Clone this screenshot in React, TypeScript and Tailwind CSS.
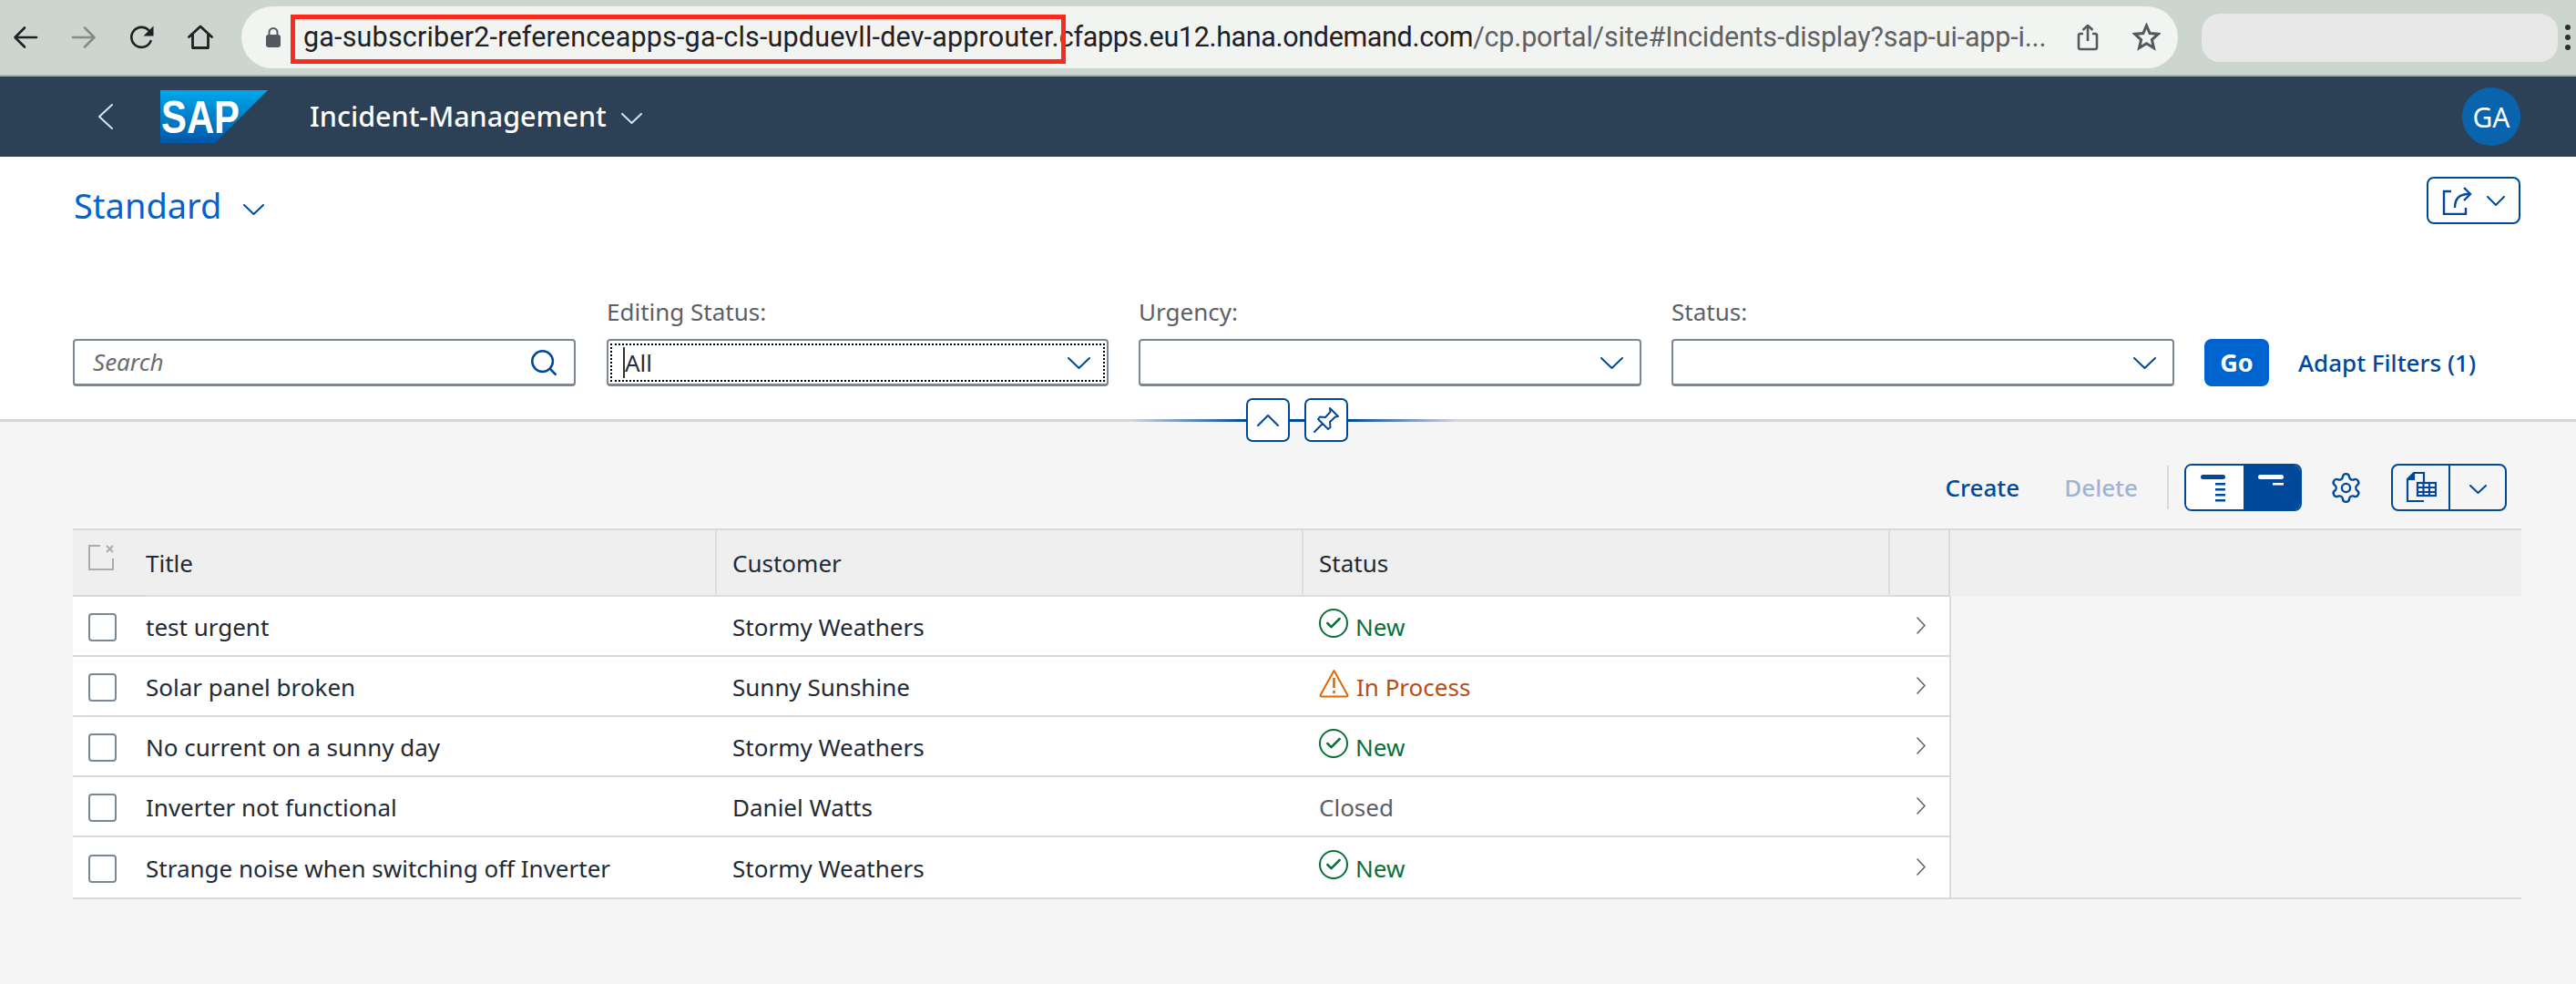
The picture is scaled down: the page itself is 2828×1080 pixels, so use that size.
import { Check, Search, Settings } from 'lucide-react';

const body = "font-['Noto_Sans',sans-serif]";

const incidents = [
  { title: 'test urgent', customer: 'Stormy Weathers', status: 'New' },
  { title: 'Solar panel broken', customer: 'Sunny Sunshine', status: 'In Process' },
  { title: 'No current on a sunny day', customer: 'Stormy Weathers', status: 'New' },
  { title: 'Inverter not functional', customer: 'Daniel Watts', status: 'Closed' },
  { title: 'Strange noise when switching off Inverter', customer: 'Stormy Weathers', status: 'New' },
];

// SAP's chevrons are much flatter than lucide's, so they get their own box
function Chevron({ w, h, dir = 'down', className, sw = 2 }: { w: number; h: number; dir?: 'down' | 'up' | 'left' | 'right'; className?: string; sw?: number }) {
  const paths = {
    down: `M1 1 ${w / 2} ${h - 1} ${w - 1} 1`,
    up: `M1 ${h - 1} ${w / 2} 1 ${w - 1} ${h - 1}`,
    left: `M${w - 1} 1 1 ${h / 2} ${w - 1} ${h - 1}`,
    right: `M1 1 ${w - 1} ${h / 2} 1 ${h - 1}`,
  };
  return (
    <svg className={className} width={w} height={h} viewBox={`0 0 ${w} ${h}`} fill="none" stroke="currentColor" strokeWidth={sw} strokeLinecap="round" strokeLinejoin="round">
      <path d={paths[dir]} />
    </svg>
  );
}

function BrowserBar() {
  return (
    <div className="flex h-[84px] items-center border-b-2 border-[#a9b0ab] bg-[#cdd5cf] font-['Roboto',sans-serif]">
      <div className="flex w-[265px] shrink-0 items-center pl-[14px] text-[#1f2124]">
        <svg width="28" height="28" viewBox="0 0 28 28" fill="none" stroke="currentColor" strokeWidth="2.6" strokeLinecap="round" strokeLinejoin="round">
          <path d="M26 14H3M13 3.5 2.5 14 13 24.5" />
        </svg>
        <svg className="ml-[36px] text-[#858b87]" width="28" height="28" viewBox="0 0 28 28" fill="none" stroke="currentColor" strokeWidth="2.6" strokeLinecap="round" strokeLinejoin="round">
          <path d="M2 14h23M15 3.5 25.5 14 15 24.5" />
        </svg>
        <svg className="ml-[36px]" width="28" height="28" viewBox="0 0 28 28" fill="none" stroke="currentColor" strokeWidth="2.6" strokeLinecap="round">
          <path d="M23.5 18a11 11 0 1 1-2-11.5" />
          <path d="M26.5 1.5v11h-11z" fill="currentColor" stroke="none" />
        </svg>
        <svg className="ml-[36px]" width="28" height="28" viewBox="0 0 28 28" fill="none" stroke="currentColor" strokeWidth="2.8" strokeLinejoin="round" strokeLinecap="round">
          <path d="M1.5 13.5 14 2l12.5 11.5M5.5 11v14.5h17V11" />
        </svg>
      </div>
      <div className="relative flex h-[68px] w-[2126px] shrink-0 items-center rounded-[34px] bg-[#f2f4f2] text-[30.5px]">
        <svg className="ml-[26px] shrink-0" width="18" height="24" viewBox="0 0 18 24">
          <rect x="1" y="9" width="16" height="14" rx="3" fill="#55585c" />
          <path d="M4.5 10V6.5a4.5 4.5 0 0 1 9 0V10" fill="none" stroke="#55585c" strokeWidth="2" />
        </svg>
        <div className="ml-[24px] whitespace-nowrap">
          <span className="tracking-[0.18px] text-[#1f2124]">ga-subscriber2-referenceapps-ga-cls-upduevll-dev-approuter.</span>
          <span className="tracking-[-0.35px] text-[#1f2124]">cfapps.eu12.hana.ondemand.com</span>
          <span className="tracking-[-0.19px] text-[#5f6265]">/cp.portal/site#Incidents-display?sap-ui-app-i...</span>
        </div>
        <div className="absolute top-[9px] left-[54px] h-[54px] w-[851px] border-[5px] border-[#fb2a1c]" />
        <svg className="absolute top-[19px] left-[2015px]" width="24" height="30" viewBox="0 0 24 30" fill="none" stroke="#55585c" strokeWidth="2.6" strokeLinejoin="round">
          <path d="M7 11H4a2 2 0 0 0-2 2v13a2 2 0 0 0 2 2h16a2 2 0 0 0 2-2V13a2 2 0 0 0-2-2h-3M12 19V2M6.5 7 12 2l5.500 5" />
        </svg>
        <svg className="absolute top-[18px] left-[2076px]" width="31" height="31" viewBox="0 0 31 31" fill="none" stroke="#55585c" strokeWidth="3" strokeLinejoin="miter">
          <path d="m15.500 3 3.600 8.600 9.300.8-7 6.100 2.100 9.100-8-4.800-8 4.800 2.100-9.100-7-6.100 9.300-.8z" />
        </svg>
      </div>
      <div className="ml-[26px] h-[53px] w-[391px] shrink-0 rounded-[20px] bg-[#e8e8e8]" />
      <div className="ml-[8px] flex flex-col gap-[5px]">
        <span className="size-[6px] rounded-full bg-[#2d2f31]" />
        <span className="size-[6px] rounded-full bg-[#2d2f31]" />
        <span className="size-[6px] rounded-full bg-[#2d2f31]" />
      </div>
    </div>
  );
}

function SapLogo() {
  return (
    <svg width="118" height="58" viewBox="0 0 118 58">
      <defs>
        <linearGradient id="sapBlue" x1="0" y1="0" x2="0" y2="1">
          <stop offset="0" stopColor="#00a8eb" />
          <stop offset="1" stopColor="#0057a8" />
        </linearGradient>
      </defs>
      <polygon points="0,0 118,0 60,58 0,58" fill="url(#sapBlue)" />
      <text x="1" y="47" fill="#fff" fontFamily="Liberation Sans" fontWeight="700" fontSize="50" textLength="86" lengthAdjust="spacingAndGlyphs">
        SAP
      </text>
    </svg>
  );
}

function ShellBar() {
  return (
    <div className="flex h-[88px] items-center bg-[#2c4056] pr-[61px] text-white">
      <Chevron className="ml-[108px] text-[#cfe6fa]" w={16} h={28} dir="left" />
      <div className="ml-[52px]">
        <SapLogo />
      </div>
      <span className="ml-[46px] text-[30.5px] font-medium">Incident-Management</span>
      <Chevron className="mt-[4px] ml-[16px] text-[#cfe6fa]" w={23} h={12} />
      <div className="ml-auto flex size-[64px] items-center justify-center rounded-full bg-[#0a63ad] text-[30px]">GA</div>
    </div>
  );
}

function FilterSelect({ label, value, width, focused }: { label: string; value?: string; width: string; focused?: boolean }) {
  return (
    <div className={width}>
      <div className="mb-[12px] h-[36px] text-[26px] leading-[36px] text-[#5b6066]">{label}</div>
      <div className="flex h-[52px] items-center rounded-[4px] border-2 border-b-[3px] border-[#7b8792] bg-white pr-[18px] pl-[16px] text-[#1f2d3d]">
        {focused ? (
          <div className="-mr-[16px] -ml-[14px] flex h-[42px] flex-1 items-center border-2 border-dotted border-black pr-[14px] pl-[12px]">
            <span className="border-l-2 border-[#333] text-[26px] leading-[34px]">{value}</span>
            <Chevron className="mt-[2px] ml-auto text-[#00499a]" w={25} h={13} />
          </div>
        ) : (
          <Chevron className="mt-[2px] ml-auto text-[#00499a]" w={25} h={13} />
        )}
      </div>
    </div>
  );
}

function FilterBar() {
  return (
    <div className="border-b-[3px] border-[#d6d6d6] bg-white pr-[61px] pl-[80px]">
      <div className="flex h-[152px] items-start justify-between pt-[22px]">
        <div className="flex items-center pt-[7px]">
          <span className="pl-[1px] text-[38px] leading-[48px] text-[#0063cf]">Standard</span>
          <Chevron className="mt-[10px] ml-[24px] text-[#00499a]" w={23} h={12} />
        </div>
        <button type="button" className="flex h-[52px] w-[103px] items-center justify-center gap-[15px] rounded-[8px] border-2 border-[#00499a] text-[#00499a]">
          <svg width="34" height="32" viewBox="0 0 34 32" fill="none" stroke="currentColor" strokeWidth="2.4">
            <path d="M10 6H2v25h24v-7" />
            <path d="M14 24c0-9 4-15 15-15" />
            <path d="m24 2 7 7-7 7" />
          </svg>
          <Chevron w={20} h={11} />
        </button>
      </div>
      <div className="flex items-end pb-[36px]">
        <div className="flex h-[52px] w-[552px] items-center rounded-[4px] border-2 border-b-[3px] border-[#7b8792] pr-[16px] pl-[20px]">
          <span className="text-[26px] text-[#6a6d70] italic">Search</span>
          <Search className="ml-auto text-[#00499a]" size={34} strokeWidth={1.8} />
        </div>
        <div className="ml-[34px] flex gap-[33px]">
          <FilterSelect label="Editing Status:" value="All" width="w-[551px]" focused />
          <FilterSelect label="Urgency:" width="w-[552px]" />
          <FilterSelect label="Status:" width="w-[552px]" />
        </div>
        <button type="button" className="ml-[33px] h-[52px] w-[71px] rounded-[8px] bg-[#0063cf] text-[27px] font-bold text-white">Go</button>
        <span className="ml-[32px] flex h-[52px] items-center text-[26px] font-medium text-[#00499a]">Adapt Filters (1)</span>
      </div>
    </div>
  );
}

function CollapseHandle() {
  return (
    <div className="relative z-10 -mt-[2px] flex h-0 items-center pl-[1241px]">
      <div className="h-[3px] w-[127px] bg-gradient-to-r from-transparent to-[#00499a]" />
      <button type="button" className="flex h-[48px] w-[48px] items-center justify-center rounded-[7px] border-2 border-[#00499a] bg-white text-[#00499a]">
        <Chevron w={24} h={13} dir="up" />
      </button>
      <div className="h-[3px] w-[16px] bg-[#00499a]" />
      <button type="button" className="flex h-[48px] w-[48px] items-center justify-center rounded-[7px] border-2 border-[#00499a] bg-white text-[#00499a]">
        <svg width="30" height="30" viewBox="0 0 30 30" fill="none" stroke="currentColor" strokeWidth="2" strokeLinejoin="round" strokeLinecap="round">
          <path d="M2 28 11 19M19 2l9 9-3 .5-6 5.500.5 6-2.500 2-11-11 2-2.500 6 .5 5.500-6z" />
        </svg>
      </button>
      <div className="h-[3px] w-[120px] bg-gradient-to-r from-[#00499a] to-transparent" />
    </div>
  );
}

function Toolbar() {
  return (
    <div className="flex items-center justify-end pt-[48px] pr-[76px] pb-[19px] text-[26px] font-medium">
      <span className="text-[#00499a]">Create</span>
      <span className="ml-[49px] text-[#9cb4d6]">Delete</span>
      <div className="ml-[32px] h-[48px] w-[2px] bg-[#d9d9d9]" />
      <div className="ml-[17px] flex h-[52px] w-[129px] overflow-hidden rounded-[8px] border-2 border-[#00499a]">
        <div className="flex flex-1 items-start justify-center bg-white pt-[10px]">
          <svg width="30" height="30" viewBox="0 0 30 30" fill="#00499a">
            <rect x="0" y="0" width="27" height="5" rx="2.500" />
            <rect x="16" y="9" width="11" height="2.500" />
            <rect x="16" y="15" width="11" height="2.500" />
            <rect x="16" y="21" width="11" height="2.500" />
            <rect x="16" y="27" width="11" height="2.500" />
          </svg>
        </div>
        <div className="flex flex-1 items-start justify-center bg-[#00499a] pt-[10px]">
          <svg width="30" height="14" viewBox="0 0 30 14" fill="#fff">
            <rect x="0" y="0" width="28" height="5" rx="2.500" />
            <rect x="16" y="9" width="12" height="2.500" />
          </svg>
        </div>
      </div>
      <Settings className="ml-[30px] text-[#00499a]" size={37} strokeWidth={1.5} />
      <div className="ml-[31px] flex h-[52px] w-[127px] rounded-[8px] border-2 border-[#00499a]">
        <div className="flex w-[63px] items-center justify-center border-r-2 border-[#00499a]">
          <svg width="34" height="34" viewBox="0 0 34 34" fill="none" stroke="#00499a" strokeWidth="2.200">
            <path d="M20 32H2V8l7-7h11v11" />
            <path d="M2 8h7V1" fill="#00499a" />
            <rect x="13" y="12" width="20" height="14" fill="#f5f5f5" />
            <path d="M13 17h20M13 22h20M19.500 12v14M26 12v14" />
          </svg>
        </div>
        <div className="flex flex-1 items-center justify-center text-[#00499a]">
          <Chevron className="mt-[4px]" w={19} h={10} />
        </div>
      </div>
    </div>
  );
}

function StatusCell({ status }: { status: string }) {
  if (status === 'New') {
    return (
      <div className="flex items-center gap-[8px] text-[#0a7039]">
        <div className="-mt-[8px] flex size-[32px] items-center justify-center rounded-full border-2 border-[#0a7039]">
          <Check size={20} strokeWidth={3} />
        </div>
        <span>New</span>
      </div>
    );
  }
  if (status === 'In Process') {
    return (
      <div className="flex items-center gap-[8px] text-[#b44f12]">
        <svg className="-mt-[8px]" width="33" height="32" viewBox="0 0 33 32" fill="none" stroke="#e76500" strokeWidth="2" strokeLinejoin="round">
          <path d="M16.500 2 1.500 29a1.500 1.500 0 0 0 1.500 1.500h27a1.500 1.500 0 0 0 1.500-1.500z" />
          <path d="M16.500 10v11M16.500 24v3" strokeWidth="2.600" />
        </svg>
        <span>In Process</span>
      </div>
    );
  }
  return <span className="text-[#5b6066]">{status}</span>;
}

function IncidentTable() {
  return (
    <div className="mr-[60px] ml-[80px] border-t-2 border-b-2 border-[#d9d9d9] text-[26px] text-[#222a33]">
      <div className="flex h-[73px] bg-[#efefef]">
        <div className="flex w-[80px] shrink-0 items-start border-b-2 border-[#d9d9d9] pt-[15px] pl-[17px]">
          <svg width="30" height="30" viewBox="0 0 30 30" fill="none" stroke="#a9adb0" strokeWidth="2">
            <path d="M13 2H1v26h26V16" />
            <path d="m20 2 7 7M27 2l-7 7" />
          </svg>
        </div>
        <div className="flex w-[627px] shrink-0 items-center border-r-2 border-b-2 border-[#dedede] pt-[1px]">Title</div>
        <div className="flex w-[644px] shrink-0 items-center border-r-2 border-b-2 border-[#dedede] pt-[1px] pl-[17px]">Customer</div>
        <div className="flex w-[644px] shrink-0 items-center border-r-2 border-b-2 border-[#dedede] pt-[1px] pl-[17px]">Status</div>
        <div className="w-[66px] shrink-0 border-r-2 border-b-2 border-[#d9d9d9]" />
      </div>
      {incidents.map((row, i) => (
        <div key={row.title} className={`flex h-[66px] w-[2062px] items-center border-r-2 border-[#d9d9d9] bg-white pt-[2px] ${i < incidents.length - 1 ? 'border-b-2' : ''}`}>
          <div className="flex w-[80px] shrink-0 pl-[17px]">
            <div className="size-[31px] rounded-[4px] border-2 border-[#7b8792]" />
          </div>
          <div className="w-[627px] shrink-0">{row.title}</div>
          <div className="w-[644px] shrink-0 pl-[17px]">{row.customer}</div>
          <div className="w-[644px] shrink-0 pl-[17px]">
            <StatusCell status={row.status} />
          </div>
          <Chevron className="-mt-[4px] ml-[29px] text-[#5b6066]" w={10} h={19} dir="right" sw={1.500} />
        </div>
      ))}
    </div>
  );
}

export default function App() {
  return (
    <div className={`h-[1080px] w-[2828px] overflow-hidden bg-[#f5f5f5] ${body}`}>
      <BrowserBar />
      <ShellBar />
      <FilterBar />
      <CollapseHandle />
      <Toolbar />
      <IncidentTable />
    </div>
  );
}
